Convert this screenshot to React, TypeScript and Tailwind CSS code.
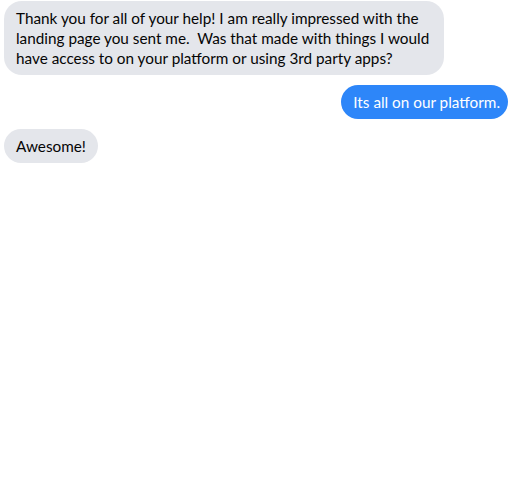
const font = { fontFamily: 'Lato, "Noto Sans", sans-serif' }

export default function App() {
  return (
    <div className="w-[508px] h-[480px] bg-white overflow-hidden" style={font}>
      <div className="flex flex-col gap-[10px] pt-px">
        <div className="self-start ml-1 w-[440px] rounded-[18px] bg-[#e4e6eb] px-3 py-[7px] text-[15.3px] leading-[20px] text-[#050505] whitespace-pre">
          {"Thank you for all of your help! I am really impressed with the\nlanding page you sent me.  Was that made with things I would\nhave access to on your platform or using 3rd party apps?"}
        </div>
        <div className="self-end h-[34px] flex items-center rounded-full bg-[#2d86f9] pl-3 pr-2 text-[15.3px] text-white">
          Its all on our platform.
        </div>
        <div className="self-start ml-1 h-[34px] flex items-center rounded-full bg-[#e4e6eb] px-3 text-[15.3px] text-[#050505]">
          Awesome!
        </div>
      </div>
    </div>
  )
}
